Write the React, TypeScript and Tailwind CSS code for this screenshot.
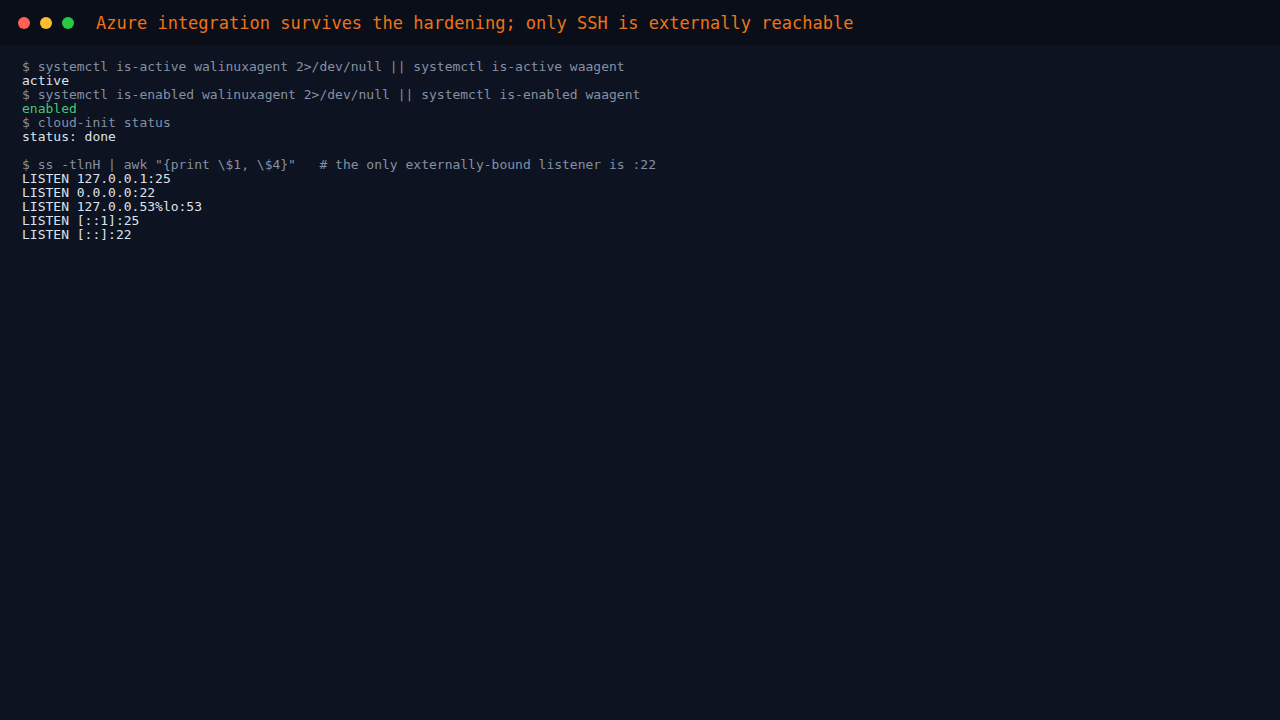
import React from "react";

type Line = { text: string; kind: "cmd" | "out" | "ok" | "blank" };

const lines: Line[] = [
  { text: "$ systemctl is-active walinuxagent 2>/dev/null || systemctl is-active waagent", kind: "cmd" },
  { text: "active", kind: "out" },
  { text: "$ systemctl is-enabled walinuxagent 2>/dev/null || systemctl is-enabled waagent", kind: "cmd" },
  { text: "enabled", kind: "ok" },
  { text: "$ cloud-init status", kind: "cmd" },
  { text: "status: done", kind: "out" },
  { text: "", kind: "blank" },
  { text: '$ ss -tlnH | awk "{print \\$1, \\$4}"   # the only externally-bound listener is :22', kind: "cmd" },
  { text: "LISTEN 127.0.0.1:25", kind: "out" },
  { text: "LISTEN 0.0.0.0:22", kind: "out" },
  { text: "LISTEN 127.0.0.53%lo:53", kind: "out" },
  { text: "LISTEN [::1]:25", kind: "out" },
  { text: "LISTEN [::]:22", kind: "out" },
];

const colors = {
  cmd: "text-[#8590a3]",
  out: "text-[#dde3ec]",
  ok: "text-[#46c870]",
  blank: "",
};

export default function App() {
  return (
    <div className="w-[1280px] h-[720px] bg-[#0d1320] flex flex-col font-['DejaVu_Sans_Mono',monospace]">
      <div className="h-[45px] bg-[#0a0e18] flex items-center pl-[18px]">
        <div className="flex gap-[10px]">
          <span className="w-[12px] h-[12px] rounded-full bg-[#ff5f57]" />
          <span className="w-[12px] h-[12px] rounded-full bg-[#febc2e]" />
          <span className="w-[12px] h-[12px] rounded-full bg-[#28c840]" />
        </div>
        <div className="ml-[22px] mt-[3px] text-[17px] text-[#ec7418]">
          Azure integration survives the hardening; only SSH is externally reachable
        </div>
      </div>
      <div className="px-[22px] pt-[15px] text-[13px] leading-[14px]">
        {lines.map((l, i) => (
          <div key={i} className={`whitespace-pre h-[14px] ${colors[l.kind]}`}>
            {l.text}
          </div>
        ))}
      </div>
    </div>
  );
}
